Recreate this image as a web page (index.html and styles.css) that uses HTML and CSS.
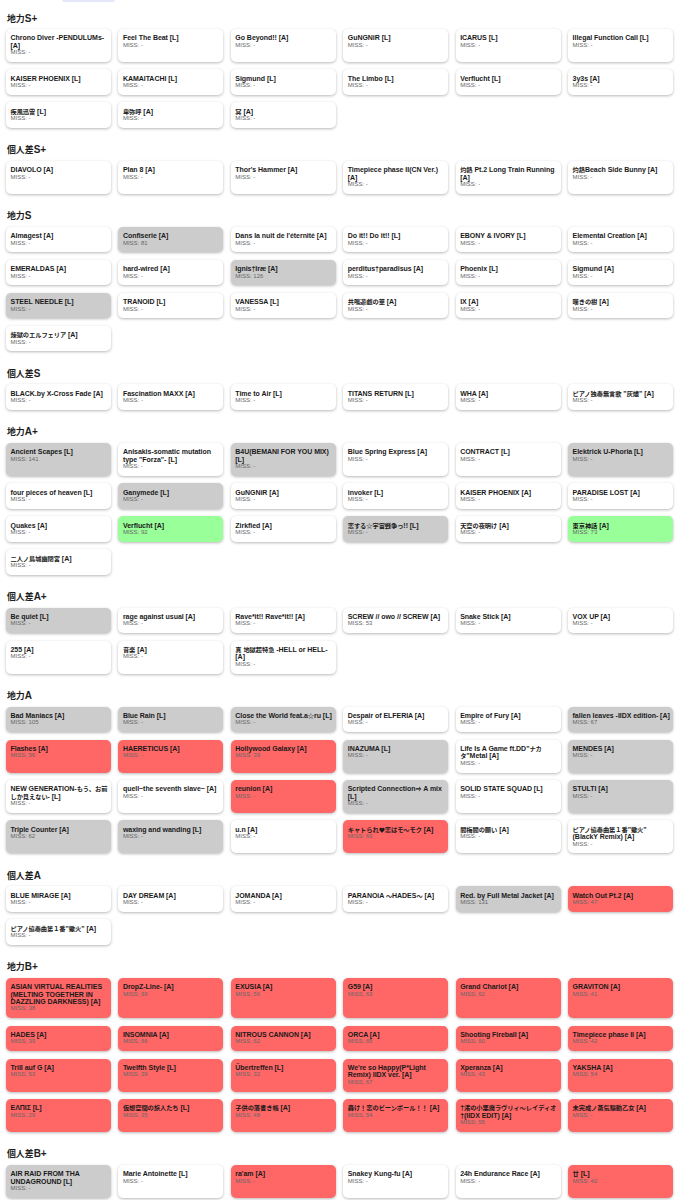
FILE: index.html
```html
<!DOCTYPE html>
<html lang="ja">
<head>
<meta charset="utf-8">
<title>Song list</title>
<link rel="stylesheet" href="styles.css">
</head>
<body>
<div class="tab-stub"></div>
<main class="page">

<section class="tier">
<h3><span class="jp">地力</span>S+</h3>
<div class="grid">
<div class="card"><div class="title">Chrono Diver -PENDULUMs-<br>[A]</div><div class="miss">MISS: -</div></div>
<div class="card"><div class="title">Feel The Beat [L]</div><div class="miss">MISS: -</div></div>
<div class="card"><div class="title">Go Beyond!! [A]</div><div class="miss">MISS: -</div></div>
<div class="card"><div class="title">GuNGNiR [L]</div><div class="miss">MISS: -</div></div>
<div class="card"><div class="title">ICARUS [L]</div><div class="miss">MISS: -</div></div>
<div class="card"><div class="title">Illegal Function Call [L]</div><div class="miss">MISS: -</div></div>
<div class="card"><div class="title">KAISER PHOENIX [L]</div><div class="miss">MISS: -</div></div>
<div class="card"><div class="title">KAMAITACHI [L]</div><div class="miss">MISS: -</div></div>
<div class="card"><div class="title">Sigmund [L]</div><div class="miss">MISS: -</div></div>
<div class="card"><div class="title">The Limbo [L]</div><div class="miss">MISS: -</div></div>
<div class="card"><div class="title">Verflucht [L]</div><div class="miss">MISS: -</div></div>
<div class="card"><div class="title">3y3s [A]</div><div class="miss">MISS: -</div></div>
<div class="card"><div class="title"><span class="jp">疾風迅雷</span> [L]</div><div class="miss">MISS: -</div></div>
<div class="card"><div class="title"><span class="jp">卑弥呼</span> [A]</div><div class="miss">MISS: -</div></div>
<div class="card"><div class="title"><span class="jp">冥</span> [A]</div><div class="miss">MISS: -</div></div>
</div>
</section>

<section class="tier">
<h3><span class="jp">個人差</span>S+</h3>
<div class="grid">
<div class="card"><div class="title">DIAVOLO [A]</div><div class="miss">MISS: -</div></div>
<div class="card"><div class="title">Plan 8 [A]</div><div class="miss">MISS: -</div></div>
<div class="card"><div class="title">Thor's Hammer [A]</div><div class="miss">MISS: -</div></div>
<div class="card"><div class="title">Timepiece phase II(CN Ver.)<br>[A]</div><div class="miss">MISS: -</div></div>
<div class="card"><div class="title"><span class="jp">灼熱</span> Pt.2 Long Train Running<br>[A]</div><div class="miss">MISS: -</div></div>
<div class="card"><div class="title"><span class="jp">灼熱</span>Beach Side Bunny [A]</div><div class="miss">MISS: -</div></div>
</div>
</section>

<section class="tier">
<h3><span class="jp">地力</span>S</h3>
<div class="grid">
<div class="card"><div class="title">Almagest [A]</div><div class="miss">MISS: -</div></div>
<div class="card gray"><div class="title">Confiserie [A]</div><div class="miss">MISS: 81</div></div>
<div class="card"><div class="title">Dans la nuit de l'éternité [A]</div><div class="miss">MISS: -</div></div>
<div class="card"><div class="title">Do it!! Do it!! [L]</div><div class="miss">MISS: -</div></div>
<div class="card"><div class="title">EBONY &amp; IVORY [L]</div><div class="miss">MISS: -</div></div>
<div class="card"><div class="title">Elemental Creation [A]</div><div class="miss">MISS: -</div></div>
<div class="card"><div class="title">EMERALDAS [A]</div><div class="miss">MISS: -</div></div>
<div class="card"><div class="title">hard-wired [A]</div><div class="miss">MISS: -</div></div>
<div class="card gray"><div class="title">Ignis†Iræ [A]</div><div class="miss">MISS: 126</div></div>
<div class="card"><div class="title">perditus†paradisus [A]</div><div class="miss">MISS: -</div></div>
<div class="card"><div class="title">Phoenix [L]</div><div class="miss">MISS: -</div></div>
<div class="card"><div class="title">Sigmund [A]</div><div class="miss">MISS: -</div></div>
<div class="card gray"><div class="title">STEEL NEEDLE [L]</div><div class="miss">MISS: -</div></div>
<div class="card"><div class="title">TRANOID [L]</div><div class="miss">MISS: -</div></div>
<div class="card"><div class="title">VANESSA [L]</div><div class="miss">MISS: -</div></div>
<div class="card"><div class="title"><span class="jp">共鳴遊戯の華</span> [A]</div><div class="miss">MISS: -</div></div>
<div class="card"><div class="title">IX [A]</div><div class="miss">MISS: -</div></div>
<div class="card"><div class="title"><span class="jp">嘆きの樹</span> [A]</div><div class="miss">MISS: -</div></div>
<div class="card"><div class="title"><span class="jp">煉獄のエルフェリア</span> [A]</div><div class="miss">MISS: -</div></div>
</div>
</section>

<section class="tier">
<h3><span class="jp">個人差</span>S</h3>
<div class="grid">
<div class="card"><div class="title">BLACK.by X-Cross Fade [A]</div><div class="miss">MISS: -</div></div>
<div class="card"><div class="title">Fascination MAXX [A]</div><div class="miss">MISS: -</div></div>
<div class="card"><div class="title">Time to Air [L]</div><div class="miss">MISS: -</div></div>
<div class="card"><div class="title">TITANS RETURN [L]</div><div class="miss">MISS: -</div></div>
<div class="card"><div class="title">WHA [A]</div><div class="miss">MISS: -</div></div>
<div class="card"><div class="title"><span class="jp">ピアノ独奏無言歌</span> "<span class="jp">灰燼</span>" [A]</div><div class="miss">MISS: -</div></div>
</div>
</section>

<section class="tier">
<h3><span class="jp">地力</span>A+</h3>
<div class="grid">
<div class="card gray"><div class="title">Ancient Scapes [L]</div><div class="miss">MISS: 141</div></div>
<div class="card"><div class="title">Anisakis-somatic mutation<br>type "Forza"- [L]</div><div class="miss">MISS: -</div></div>
<div class="card gray"><div class="title">B4U(BEMANI FOR YOU MIX)<br>[L]</div><div class="miss">MISS: -</div></div>
<div class="card"><div class="title">Blue Spring Express [A]</div><div class="miss">MISS: -</div></div>
<div class="card"><div class="title">CONTRACT [L]</div><div class="miss">MISS: -</div></div>
<div class="card gray"><div class="title">Elektrick U-Phoria [L]</div><div class="miss">MISS: -</div></div>
<div class="card"><div class="title">four pieces of heaven [L]</div><div class="miss">MISS: -</div></div>
<div class="card gray"><div class="title">Ganymede [L]</div><div class="miss">MISS: -</div></div>
<div class="card"><div class="title">GuNGNiR [A]</div><div class="miss">MISS: -</div></div>
<div class="card"><div class="title">invoker [L]</div><div class="miss">MISS: -</div></div>
<div class="card"><div class="title">KAISER PHOENIX [A]</div><div class="miss">MISS: -</div></div>
<div class="card"><div class="title">PARADISE LOST [A]</div><div class="miss">MISS: -</div></div>
<div class="card"><div class="title">Quakes [A]</div><div class="miss">MISS: -</div></div>
<div class="card green"><div class="title">Verflucht [A]</div><div class="miss">MISS: 92</div></div>
<div class="card"><div class="title">Zirkfied [A]</div><div class="miss">MISS: -</div></div>
<div class="card gray"><div class="title"><span class="jp">恋する☆宇宙戦争っ</span>!! [L]</div><div class="miss">MISS: -</div></div>
<div class="card"><div class="title"><span class="jp">天空の夜明け</span> [A]</div><div class="miss">MISS: -</div></div>
<div class="card green"><div class="title"><span class="jp">東京神話</span> [A]</div><div class="miss">MISS: 73</div></div>
<div class="card"><div class="title"><span class="jp">二人ノ鳥城幽閉宮</span> [A]</div><div class="miss">MISS: -</div></div>
</div>
</section>

<section class="tier">
<h3><span class="jp">個人差</span>A+</h3>
<div class="grid">
<div class="card gray"><div class="title">Be quiet [L]</div><div class="miss">MISS: -</div></div>
<div class="card"><div class="title">rage against usual [A]</div><div class="miss">MISS: -</div></div>
<div class="card"><div class="title">Rave*it!! Rave*it!! [A]</div><div class="miss">MISS: -</div></div>
<div class="card"><div class="title">SCREW // owo // SCREW [A]</div><div class="miss">MISS: 53</div></div>
<div class="card"><div class="title">Snake Stick [A]</div><div class="miss">MISS: -</div></div>
<div class="card"><div class="title">VOX UP [A]</div><div class="miss">MISS: -</div></div>
<div class="card"><div class="title">255 [A]</div><div class="miss">MISS: -</div></div>
<div class="card"><div class="title"><span class="jp">音楽</span> [A]</div><div class="miss">MISS: -</div></div>
<div class="card"><div class="title"><span class="jp">真</span> <span class="jp">地獄超特急</span> -HELL or HELL-<br>[A]</div><div class="miss">MISS: -</div></div>
</div>
</section>

<section class="tier">
<h3><span class="jp">地力</span>A</h3>
<div class="grid">
<div class="card gray"><div class="title">Bad Maniacs [A]</div><div class="miss">MISS: 105</div></div>
<div class="card gray"><div class="title">Blue Rain [L]</div><div class="miss">MISS: -</div></div>
<div class="card gray"><div class="title">Close the World feat.a<span class="jp">☆</span>ru [L]</div><div class="miss">MISS: -</div></div>
<div class="card"><div class="title">Despair of ELFERIA [A]</div><div class="miss">MISS: -</div></div>
<div class="card"><div class="title">Empire of Fury [A]</div><div class="miss">MISS: -</div></div>
<div class="card gray"><div class="title">fallen leaves -IIDX edition- [A]</div><div class="miss">MISS: 67</div></div>
<div class="card red"><div class="title">Flashes [A]</div><div class="miss">MISS: 56</div></div>
<div class="card red"><div class="title">HAERETICUS [A]</div><div class="miss">MISS: -</div></div>
<div class="card red"><div class="title">Hollywood Galaxy [A]</div><div class="miss">MISS: 39</div></div>
<div class="card gray"><div class="title">INAZUMA [L]</div><div class="miss">MISS: -</div></div>
<div class="card"><div class="title">Life Is A Game ft.DD"<span class="jp">ナカ</span><br><span class="jp">タ</span>"Metal [A]</div><div class="miss">MISS: -</div></div>
<div class="card gray"><div class="title">MENDES [A]</div><div class="miss">MISS: -</div></div>
<div class="card"><div class="title">NEW GENERATION-<span class="jp">もう、お前</span><br><span class="jp">しか見えない</span>- [L]</div><div class="miss">MISS: -</div></div>
<div class="card"><div class="title">quell~the seventh slave~ [A]</div><div class="miss">MISS: -</div></div>
<div class="card red"><div class="title">reunion [A]</div><div class="miss">MISS: -</div></div>
<div class="card gray"><div class="title">Scripted Connection<span class="jp">⇒</span> A mix<br>[L]</div><div class="miss">MISS: -</div></div>
<div class="card"><div class="title">SOLID STATE SQUAD [L]</div><div class="miss">MISS: -</div></div>
<div class="card gray"><div class="title">STULTI [A]</div><div class="miss">MISS: -</div></div>
<div class="card gray"><div class="title">Triple Counter [A]</div><div class="miss">MISS: 62</div></div>
<div class="card gray"><div class="title">waxing and wanding [L]</div><div class="miss">MISS: -</div></div>
<div class="card"><div class="title">u.n [A]</div><div class="miss">MISS: -</div></div>
<div class="card red"><div class="title"><span class="jp">キャトられ♥恋はモ～モク</span> [A]</div><div class="miss">MISS: 69</div></div>
<div class="card"><div class="title"><span class="jp">閻梅閻の願い</span> [A]</div><div class="miss">MISS: -</div></div>
<div class="card"><div class="title"><span class="jp">ピアノ協奏曲第１番</span>"<span class="jp">蠍火</span>"<br>(BlackY Remix) [A]</div><div class="miss">MISS: -</div></div>
</div>
</section>

<section class="tier">
<h3><span class="jp">個人差</span>A</h3>
<div class="grid">
<div class="card"><div class="title">BLUE MIRAGE [A]</div><div class="miss">MISS: -</div></div>
<div class="card"><div class="title">DAY DREAM [A]</div><div class="miss">MISS: -</div></div>
<div class="card"><div class="title">JOMANDA [A]</div><div class="miss">MISS: -</div></div>
<div class="card"><div class="title">PARANOiA <span class="jp">～</span>HADES<span class="jp">～</span> [A]</div><div class="miss">MISS: -</div></div>
<div class="card gray"><div class="title">Red. by Full Metal Jacket [A]</div><div class="miss">MISS: 131</div></div>
<div class="card red"><div class="title">Watch Out Pt.2 [A]</div><div class="miss">MISS: 47</div></div>
<div class="card"><div class="title"><span class="jp">ピアノ協奏曲第１番</span>"<span class="jp">蠍火</span>" [A]</div><div class="miss">MISS: -</div></div>
</div>
</section>

<section class="tier">
<h3><span class="jp">地力</span>B+</h3>
<div class="grid">
<div class="card red"><div class="title">ASIAN VIRTUAL REALITIES<br>(MELTING TOGETHER IN<br>DAZZLING DARKNESS) [A]</div><div class="miss">MISS: 38</div></div>
<div class="card red"><div class="title">DropZ-Line- [A]</div><div class="miss">MISS: 69</div></div>
<div class="card red"><div class="title">EXUSIA [A]</div><div class="miss">MISS: 56</div></div>
<div class="card red"><div class="title">G59 [A]</div><div class="miss">MISS: 63</div></div>
<div class="card red"><div class="title">Grand Chariot [A]</div><div class="miss">MISS: 62</div></div>
<div class="card red"><div class="title">GRAVITON [A]</div><div class="miss">MISS: 41</div></div>
<div class="card red"><div class="title">HADES [A]</div><div class="miss">MISS: 39</div></div>
<div class="card red"><div class="title">INSOMNIA [A]</div><div class="miss">MISS: 66</div></div>
<div class="card red"><div class="title">NITROUS CANNON [A]</div><div class="miss">MISS: 62</div></div>
<div class="card red"><div class="title">ORCA [A]</div><div class="miss">MISS: 65</div></div>
<div class="card red"><div class="title">Shooting Fireball [A]</div><div class="miss">MISS: 60</div></div>
<div class="card red"><div class="title">Timepiece phase II [A]</div><div class="miss">MISS: 42</div></div>
<div class="card red"><div class="title">Trill auf G [A]</div><div class="miss">MISS: 53</div></div>
<div class="card red"><div class="title">Twelfth Style [L]</div><div class="miss">MISS: 39</div></div>
<div class="card red"><div class="title">Übertreffen [L]</div><div class="miss">MISS: 32</div></div>
<div class="card red"><div class="title">We're so Happy(P*Light<br>Remix) IIDX ver. [A]</div><div class="miss">MISS: 67</div></div>
<div class="card red"><div class="title">Xperanza [A]</div><div class="miss">MISS: 43</div></div>
<div class="card red"><div class="title">YAKSHA [A]</div><div class="miss">MISS: 54</div></div>
<div class="card red"><div class="title">ΕΛΠΙΣ [L]</div><div class="miss">MISS: 29</div></div>
<div class="card red"><div class="title"><span class="jp">仮想空間の旅人たち</span> [L]</div><div class="miss">MISS: 35</div></div>
<div class="card red"><div class="title"><span class="jp">子供の落書き帳</span> [A]</div><div class="miss">MISS: 48</div></div>
<div class="card red"><div class="title"><span class="jp">轟け！恋のビーンボール！！</span> [A]</div><div class="miss">MISS: 54</div></div>
<div class="card red"><div class="title">†<span class="jp">渚の小悪魔ラヴリィ～レイディオ</span><br>†(IIDX EDIT) [A]</div><div class="miss">MISS: 55</div></div>
<div class="card red"><div class="title"><span class="jp">未完成ノ蒸気驅動乙女</span> [A]</div><div class="miss">MISS: -</div></div>
</div>
</section>

<section class="tier">
<h3><span class="jp">個人差</span>B+</h3>
<div class="grid">
<div class="card gray"><div class="title">AIR RAID FROM THA<br>UNDAGROUND [L]</div><div class="miss">MISS: -</div></div>
<div class="card"><div class="title">Marie Antoinette [L]</div><div class="miss">MISS: -</div></div>
<div class="card red"><div class="title">ra'am [A]</div><div class="miss">MISS: -</div></div>
<div class="card"><div class="title">Snakey Kung-fu [A]</div><div class="miss">MISS: -</div></div>
<div class="card"><div class="title">24h Endurance Race [A]</div><div class="miss">MISS: -</div></div>
<div class="card red"><div class="title"><span class="jp">廿</span> [L]</div><div class="miss">MISS: 42</div></div>
</div>
</section>

</main>
</body>
</html>
```

FILE: styles.css
```css
html, body {
  margin: 0;
  padding: 0;
  background: #ffffff;
}

body {
  font-family: "Liberation Sans", "Noto Sans CJK JP", sans-serif;
  color: #222222;
}

.tab-stub {
  margin-left: 62px;
  width: 53px;
  height: 1.5px;
  background: #e6e6fb;
  border-radius: 0 0 2px 2px;
}

.page {
  display: flex;
  flex-direction: column;
  gap: 16.5px;
  padding: 11px 10px 20px 6px;
}

.tier h3 {
  margin: 0 0 5.5px 1px;
  font-size: 10px;
  line-height: 11px;
  font-weight: bold;
  color: #1e1e1e;
}

.jp {
  font-family: "Noto Sans CJK JP", "Liberation Sans", sans-serif;
  font-size: 0.89em;
  line-height: 1;
}

.grid {
  display: grid;
  grid-template-columns: repeat(6, 1fr);
  column-gap: 7.5px;
  row-gap: 7.5px;
}

.card {
  background: #ffffff;
  border-radius: 5px;
  padding: 5.3px 4.5px;
  box-shadow: 0 1px 3px rgba(0, 0, 0, 0.28);
  min-width: 0;
}

.card.gray {
  background: #cccccc;
}

.card.red {
  background: #ff6666;
}

.card.green {
  background: #99ff99;
}

.title {
  font-size: 7px;
  line-height: 7.4px;
  font-weight: bold;
  letter-spacing: -0.04px;
  white-space: nowrap;
  color: #1a1a1a;
}

.miss {
  font-size: 6px;
  line-height: 7.5px;
  color: #666666;
}
```
